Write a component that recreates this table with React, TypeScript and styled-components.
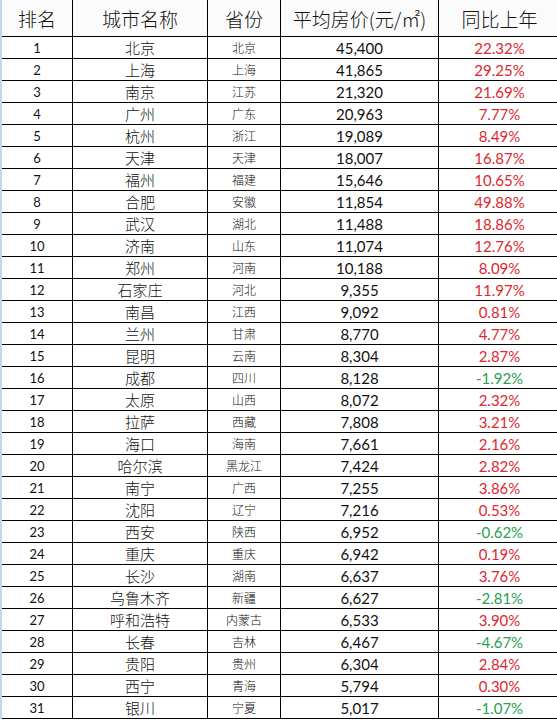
import React from 'react';
import styled, { createGlobalStyle } from 'styled-components';

const GlobalStyle = createGlobalStyle`
	html, body {
		margin: 0;
		padding: 0;
		background: #ffffff;
	}
`;

type Row = [number, string, string, string, string];

const rows: Row[] = [
	[1, '北京', '北京', '45,400', '22.32%'],
	[2, '上海', '上海', '41,865', '29.25%'],
	[3, '南京', '江苏', '21,320', '21.69%'],
	[4, '广州', '广东', '20,963', '7.77%'],
	[5, '杭州', '浙江', '19,089', '8.49%'],
	[6, '天津', '天津', '18,007', '16.87%'],
	[7, '福州', '福建', '15,646', '10.65%'],
	[8, '合肥', '安徽', '11,854', '49.88%'],
	[9, '武汉', '湖北', '11,488', '18.86%'],
	[10, '济南', '山东', '11,074', '12.76%'],
	[11, '郑州', '河南', '10,188', '8.09%'],
	[12, '石家庄', '河北', '9,355', '11.97%'],
	[13, '南昌', '江西', '9,092', '0.81%'],
	[14, '兰州', '甘肃', '8,770', '4.77%'],
	[15, '昆明', '云南', '8,304', '2.87%'],
	[16, '成都', '四川', '8,128', '-1.92%'],
	[17, '太原', '山西', '8,072', '2.32%'],
	[18, '拉萨', '西藏', '7,808', '3.21%'],
	[19, '海口', '海南', '7,661', '2.16%'],
	[20, '哈尔滨', '黑龙江', '7,424', '2.82%'],
	[21, '南宁', '广西', '7,255', '3.86%'],
	[22, '沈阳', '辽宁', '7,216', '0.53%'],
	[23, '西安', '陕西', '6,952', '-0.62%'],
	[24, '重庆', '重庆', '6,942', '0.19%'],
	[25, '长沙', '湖南', '6,637', '3.76%'],
	[26, '乌鲁木齐', '新疆', '6,627', '-2.81%'],
	[27, '呼和浩特', '内蒙古', '6,533', '3.90%'],
	[28, '长春', '吉林', '6,467', '-4.67%'],
	[29, '贵阳', '贵州', '6,304', '2.84%'],
	[30, '西宁', '青海', '5,794', '0.30%'],
	[31, '银川', '宁夏', '5,017', '-1.07%'],
];

const Sheet = styled.div`
	width: 557px;
	border-left: 2px solid #c6d6ea;
	box-sizing: border-box;
`;

const Table = styled.table`
	border-collapse: collapse;
	table-layout: fixed;
	width: 555px;
	font-family: 'Noto Sans CJK SC', 'Noto Sans', sans-serif;
	color: #111111;
`;

const HeadCell = styled.th<{ $w: number }>`
	width: ${(p) => p.$w}px;
	height: 36px;
	padding: 0;
	font-size: 19px;
	font-weight: 300;
	text-align: center;
	background: #fbfbfb;
	border: 1px solid #000000;
	border-top: none;
	&:first-child {
		border-left: none;
	}
`;

const Cell = styled.td<{ $kind: 'num' | 'city' | 'prov' | 'price' | 'chg'; $tone?: 'up' | 'down' }>`
	height: 21px;
	padding: 0;
	text-align: center;
	border: 1px solid #000000;
	line-height: 20px;
	white-space: nowrap;
	&:first-child {
		border-left: none;
	}
	font-family: ${(p) =>
		p.$kind === 'num' || p.$kind === 'price' || p.$kind === 'chg'
			? "Lato, 'Open Sans', sans-serif"
			: "'Noto Sans CJK SC', sans-serif"};
	font-weight: ${(p) => (p.$kind === 'city' || p.$kind === 'prov' ? 300 : 400)};
	font-size: ${(p) =>
		p.$kind === 'prov' ? '12px' : p.$kind === 'city' ? '15px' : p.$kind === 'num' ? '13px' : '15px'};
	color: ${(p) => (p.$tone === 'up' ? '#e0262e' : p.$tone === 'down' ? '#27a152' : '#111111')};
`;

const App = () => {
	return (
		<>
			<GlobalStyle />
			<Sheet>
				<Table>
					<thead>
						<tr>
							<HeadCell $w={70}>排名</HeadCell>
							<HeadCell $w={134}>城市名称</HeadCell>
							<HeadCell $w={72}>省份</HeadCell>
							<HeadCell $w={157}>平均房价(元/㎡)</HeadCell>
							<HeadCell $w={121}>同比上年</HeadCell>
						</tr>
					</thead>
					<tbody>
						{rows.map(([rank, city, prov, price, chg]) => (
							<tr key={rank}>
								<Cell $kind="num">{rank}</Cell>
								<Cell $kind="city">{city}</Cell>
								<Cell $kind="prov">{prov}</Cell>
								<Cell $kind="price">{price}</Cell>
								<Cell $kind="chg" $tone={chg.startsWith('-') ? 'down' : 'up'}>
									{chg}
								</Cell>
							</tr>
						))}
					</tbody>
				</Table>
			</Sheet>
		</>
	);
};

export default App;
